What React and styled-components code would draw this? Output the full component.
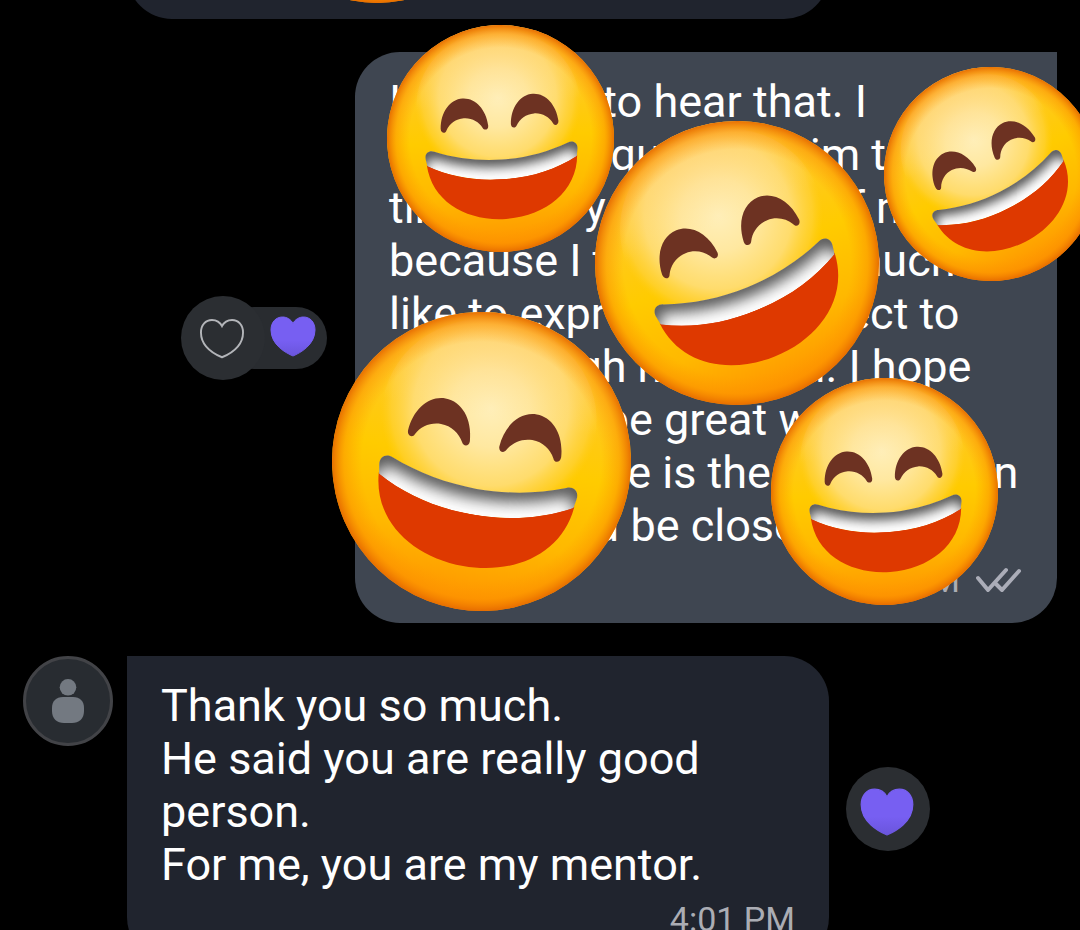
import { useId } from "react";
import styled, { createGlobalStyle } from "styled-components";

// ====== DATA ======
const OUTGOING_TEXT = `I was glad to hear that. I
will even request to him to
time with your advice of my
because I trust him so much
like to express my respect to
you through my friend. I hope
she would be great with my
mentor as he is the best person
who should be closer`;

const INCOMING_TEXT = `Thank you so much.
He said you are really good
person.
For me, you are my mentor.`;

const STICKERS = [
  { x: 377, y: -124, size: 254, angle: 0 },
  { x: 500, y: 138, size: 227, angle: -4 },
  { x: 991, y: 174, size: 214, angle: -27 },
  { x: 737, y: 263, size: 284, angle: -22 },
  { x: 481, y: 461, size: 299, angle: 10 },
  { x: 884, y: 491, size: 227, angle: -4 },
];

// ====== STYLED COMPONENTS ======
const GlobalStyle = createGlobalStyle`
  * {
    box-sizing: border-box;
  }

  body {
    margin: 0;
    background: #000;
    font-family: Roboto, "Liberation Sans", sans-serif;
  }
`;

const Chat = styled.main`
  position: relative;
  display: flex;
  flex-direction: column;
  gap: 33px;
  height: 100vh;
  padding: 0 23px;
  overflow: hidden;
  background: #000;
`;

const Row = styled.section`
  display: flex;
  flex-shrink: 0;
  align-items: center;
  justify-content: ${({ $outgoing }) => ($outgoing ? "flex-end" : "flex-start")};
`;

const Bubble = styled.article`
  width: 65vw;
  padding: 23px 34px;
  color: #fff;
  background: ${({ $outgoing }) => ($outgoing ? "#3f4651" : "#20242e")};
  border-radius: ${({ $outgoing }) =>
    $outgoing ? "45px 0 45px 45px" : "0 45px 45px 45px"};
`;

const PreviousBubble = styled.div`
  flex-shrink: 0;
  width: 65vw;
  height: 19px;
  margin-left: 104px;
  overflow: hidden;

  &::before {
    content: "";
    display: block;
    height: 90px;
    margin-top: -71px;
    border-radius: 45px;
    background: #20242e;
  }
`;

const Text = styled.p`
  margin: 0;
  font-size: 45px;
  line-height: 53px;
  white-space: pre-line;
`;

const Meta = styled.footer`
  display: flex;
  align-items: center;
  justify-content: flex-end;
  gap: 16px;
  margin-top: 8px;
  color: #abadb4;
  font-size: 34px;
  line-height: 40px;
`;

const Avatar = styled.div`
  display: flex;
  align-items: center;
  justify-content: center;
  align-self: flex-start;
  width: 90px;
  height: 90px;
  margin-right: 14px;
  border: 3px solid #424347;
  border-radius: 50%;
  background: #282c31;
`;

const Reactions = styled.div`
  display: flex;
  align-items: center;
  margin-right: 28px;
`;

const ReactButton = styled.button`
  z-index: 1;
  display: flex;
  align-items: center;
  justify-content: center;
  width: 84px;
  height: 84px;
  padding: ${({ $active }) => ($active ? "6px 2px 0 0" : "3px 2px 0 0")};
  margin-left: ${({ $active }) => ($active ? "17px" : "0")};
  border: none;
  border-radius: 50%;
  background: #2b2e32;
  cursor: pointer;
`;

const ReactionPill = styled.button`
  display: flex;
  align-items: center;
  justify-content: flex-end;
  width: 104px;
  height: 62px;
  padding: 0 11px 3px 0;
  margin-left: -42px;
  border: none;
  border-radius: 31px;
  background: #292c30;
  cursor: pointer;
`;

const Sticker = styled.svg`
  position: absolute;
  z-index: 2;
  pointer-events: none;
`;

// ====== ICONS ======
function Heart({ width, outline }) {
  const id = useId();

  return (
    <svg width={width} viewBox="0 0 46 41" aria-hidden="true">
      <defs>
        <linearGradient id={id} x1="0" y1="0" x2="0" y2="1">
          <stop offset="0.6" stopColor="#775ff2" />
          <stop offset="1" stopColor="#6a55dc" />
        </linearGradient>
      </defs>
      <path
        d="M23 40 C16 37 1 29 1 14 C1 6 6 1 12.500 1 C17 1 21 3.500 23 7.500 C25 3.500 29 1 33.500 1 C40 1 45 6 45 14 C45 29 30 37 23 40Z"
        fill={outline ? "none" : `url(#${id})`}
        stroke={outline ? "#b3b5b9" : `url(#${id})`}
        strokeWidth={outline ? 2 : 1}
      />
    </svg>
  );
}

function PersonIcon() {
  return (
    <svg width="32" height="45" viewBox="0 0 32 45" aria-hidden="true">
      <circle cx="16" cy="8.300" r="8.300" fill="#737981" />
      <path
        d="M11 18 H21 C28 18 32 22 32 29 V32 C32 40 27 44 20 44 H12 C5 44 0 40 0 32 V29 C0 22 4 18 11 18Z"
        fill="#737981"
      />
    </svg>
  );
}

function ReadIcon() {
  return (
    <svg width="47" height="26" viewBox="0 0 47 26" aria-label="Read">
      <g
        fill="none"
        stroke="#abadb8"
        strokeWidth="4"
        strokeLinecap="round"
        strokeLinejoin="round"
      >
        <path d="M2 11 L12 23 L30 3" />
        <path d="M20 17 L26 23 L43 4" />
      </g>
    </svg>
  );
}

const EYE =
  "M-26 -6 C-25.500 -13.500 -21 -18.700 -15.500 -18.700 C-10 -18.700 -5.500 -13.500 -5 -6 C-5 -4 -7 -4 -7.500 -5.200 C-9 -8 -12 -10 -15.500 -10 C-19 -10 -22 -8 -23.500 -5.200 C-24 -3.700 -26 -4 -26 -6Z";
const TEETH =
  "M-33.500 7 C-34 4 -31.500 2.800 -29.500 3.800 C-20 7.500 -10 9.300 0 9.300 C10 9.300 20 7.500 29.500 3.800 C31.500 2.800 34 4 33.500 7 L33 10 C23 15.500 12 18 0 18 C-12 18 -23 15.500 -33 10Z";
const MOUTH =
  "M-33.200 9.500 C-23 15.500 -12 17.800 0 17.800 C12 17.800 23 15.500 33.200 9.500 C32 26 17 35.500 0 35.500 C-17 35.500 -32 26 -33.200 9.500Z";

function LaughingFace({ x, y, size, angle }) {
  const id = useId();

  return (
    <Sticker
      width={size}
      height={size}
      viewBox="-50 -50 100 100"
      aria-label="Laughing face"
      style={{ left: Math.round(x - size / 2), top: Math.round(y - size / 2) }}
    >
      <defs>
        <linearGradient id={`${id}-base`} x1="0" y1="0" x2="0" y2="1">
          <stop offset="0" stopColor="#ffc644" />
          <stop offset="0.5" stopColor="#ffcb00" />
          <stop offset="0.75" stopColor="#ffb800" />
          <stop offset="1" stopColor="#ff9000" />
        </linearGradient>
        <radialGradient
          id={`${id}-light`}
          gradientUnits="userSpaceOnUse"
          cx="0"
          cy="0"
          r="37"
          gradientTransform="translate(0 -18)"
        >
          <stop offset="0" stopColor="#ffefba" />
          <stop offset="0.35" stopColor="#ffe8a0" />
          <stop offset="0.7" stopColor="#ffde78" stopOpacity="0.9" />
          <stop offset="0.9" stopColor="#ffd650" stopOpacity="0.450" />
          <stop offset="1" stopColor="#ffd020" stopOpacity="0" />
        </radialGradient>
        <linearGradient id={`${id}-top`} x1="0" y1="0" x2="0" y2="1">
          <stop offset="0" stopColor="#ffcb70" stopOpacity="0.9" />
          <stop offset="0.5" stopColor="#ffdc90" stopOpacity="0" />
        </linearGradient>
        <radialGradient
          id={`${id}-edge`}
          gradientUnits="userSpaceOnUse"
          cx="0"
          cy="0"
          r="50"
        >
          <stop offset="0.8" stopColor="#ff9a00" stopOpacity="0" />
          <stop offset="0.92" stopColor="#fb9000" stopOpacity="0.5" />
          <stop offset="1" stopColor="#e66b00" stopOpacity="0.95" />
        </radialGradient>
        <clipPath id={`${id}-teeth`}>
          <path d={TEETH} />
        </clipPath>
        <filter id={`${id}-soft`} x="-20%" y="-100%" width="140%" height="300%">
          <feGaussianBlur stdDeviation="2.600" />
        </filter>
      </defs>
      <g transform={`rotate(${angle})`}>
        <circle r="50" fill={`url(#${id}-base)`} />
        <circle r="50" fill={`url(#${id}-light)`} />
        <ellipse cy="-15" rx="36" ry="33" fill={`url(#${id}-top)`} opacity="0.6" />
        <circle r="50" fill={`url(#${id}-edge)`} />
        <path d={EYE} fill="#6d3222" />
        <path d={EYE} fill="#6d3222" transform="scale(-1 1)" />
        <path d={MOUTH} fill="#de3900" />
        <g clipPath={`url(#${id}-teeth)`}>
          <path d={TEETH} fill="#fff" />
          <path
            d="M-37 12 L-36 4 L-29.500 3 C-20 7 -10 8.800 0 8.800 C10 8.800 20 7 29.500 3 L36 4 L37 12"
            fill="none"
            stroke="#4c4c4c"
            strokeWidth="7"
            filter={`url(#${id}-soft)`}
          />
        </g>
      </g>
    </Sticker>
  );
}

// ====== PAGE ======
export default function App() {
  return (
    <>
      <GlobalStyle />
      <Chat>
        <PreviousBubble />

        <Row $outgoing>
          <Reactions>
            <ReactButton aria-label="Add reaction">
              <Heart width={44} outline />
            </ReactButton>
            <ReactionPill aria-label="Heart reaction">
              <Heart width={46} />
            </ReactionPill>
          </Reactions>
          <Bubble $outgoing>
            <Text>{OUTGOING_TEXT}</Text>
            <Meta>
              <time>3:58 PM</time>
              <ReadIcon />
            </Meta>
          </Bubble>
        </Row>

        <Row>
          <Avatar>
            <PersonIcon />
          </Avatar>
          <Bubble>
            <Text>{INCOMING_TEXT}</Text>
            <Meta>
              <time>4:01 PM</time>
            </Meta>
          </Bubble>
          <ReactButton $active aria-label="Remove heart reaction">
            <Heart width={54} />
          </ReactButton>
        </Row>

        {STICKERS.map((sticker) => (
          <LaughingFace key={`${sticker.x}-${sticker.y}`} {...sticker} />
        ))}
      </Chat>
    </>
  );
}
